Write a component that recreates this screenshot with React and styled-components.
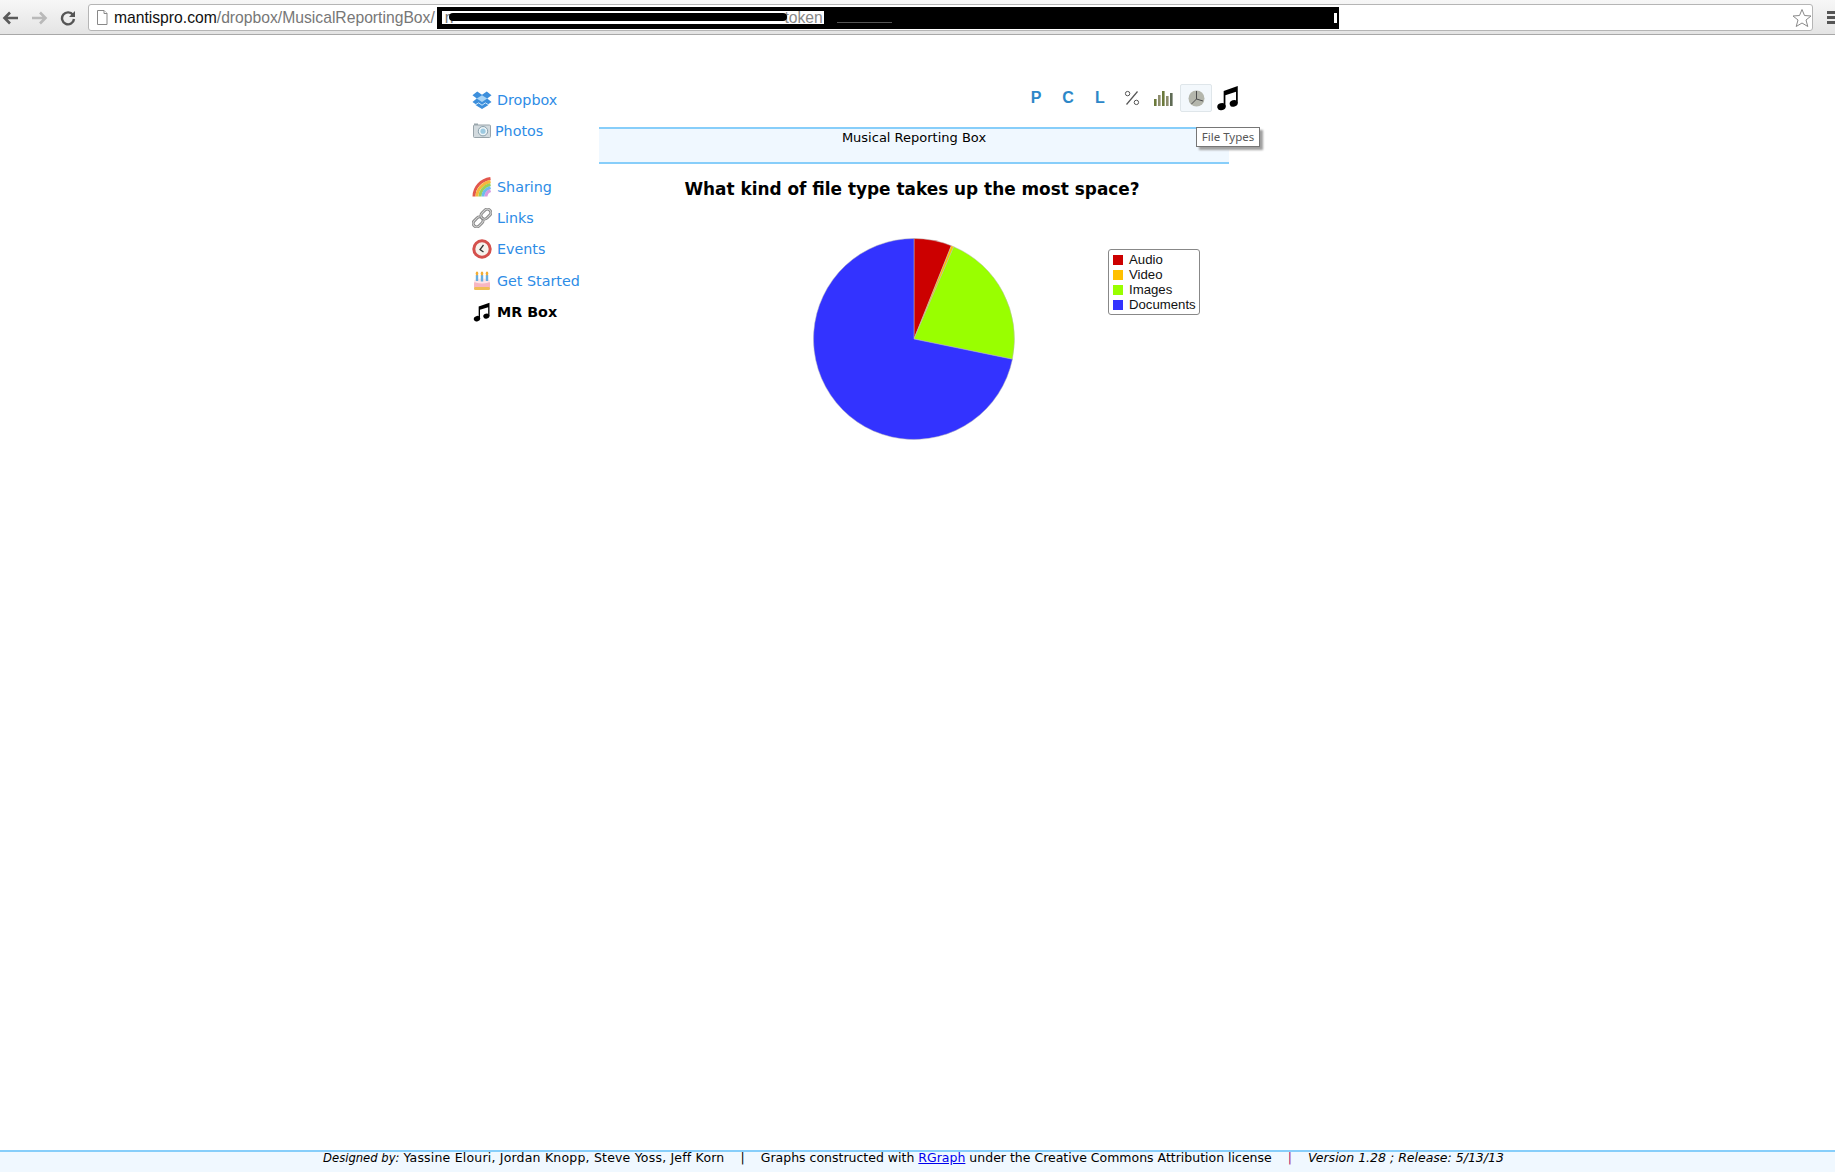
import React from "react";
import styled, { createGlobalStyle } from "styled-components";

const GlobalStyle = createGlobalStyle`
  html, body {
    margin: 0;
    padding: 0;
    background: #fff;
    font-family: "DejaVu Sans", Verdana, sans-serif;
  }
`;

const slices = [
  { label: "Audio", color: "#cc0000", from: 0, to: 21.8 },
  { label: "Video", color: "#ffc000", from: 21.8, to: 23.3 },
  { label: "Images", color: "#99ff00", from: 23.3, to: 101.6 },
  { label: "Documents", color: "#3333ff", from: 101.6, to: 360 },
];

const slicePath = (from, to, r, c) => {
  const point = (deg) => {
    const rad = (deg * Math.PI) / 180;
    return `${c + r * Math.sin(rad)} ${c - r * Math.cos(rad)}`;
  };
  const large = to - from > 180 ? 1 : 0;
  return `M${c} ${c} L${point(from)} A${r} ${r} 0 ${large} 1 ${point(to)} Z`;
};

const MusicNote = ({ size }) => (
  <svg width={size} height={size} viewBox="0 0 24 24">
    <path d="M8 5.5 L21 1 V17 H19.4 V6.2 L9.6 9.4 V20 H8 Z" fill="#000" />
    <ellipse cx="6" cy="20" rx="3.9" ry="3.2" fill="#000" transform="rotate(-18 6 20)" />
    <ellipse cx="17.2" cy="17" rx="3.7" ry="3" fill="#000" transform="rotate(-18 17.2 17)" />
  </svg>
);

const DropboxIcon = () => (
  <svg width="21" height="20" viewBox="0 0 21 21">
    <path d="M5.5 1.5 L10.5 5 L15.5 1.5 L20.5 5.5 L16 9 L20.5 12.5 L17 15 V16 L10.5 20 L4 16 V15 L.5 12.5 L5 9 L.5 5.5 Z" fill="#3d8fdc" />
    <path d="M5 9 L10.5 5.5 L16 9 L10.5 12.5 Z" fill="#a9d4f5" />
    <path d="M4.2 15.2 L7 13.5 L10.5 16 L14 13.5 L16.8 15.2" fill="none" stroke="#d6ecfb" strokeWidth="1" />
  </svg>
);

const CameraIcon = () => (
  <svg width="18" height="15" viewBox="0 0 18 15">
    <rect x="1" y="0.5" width="4" height="2" fill="#9aa5ab" />
    <rect x="0.5" y="2" width="17" height="12.5" rx="1" fill="#d2dade" stroke="#99a4aa" />
    <circle cx="10" cy="8.2" r="4.7" fill="#eef5f8" stroke="#8aa0ac" />
    <circle cx="10" cy="8.2" r="2.6" fill="#9cc9e0" />
  </svg>
);

const RainbowIcon = () => (
  <svg width="20" height="20" viewBox="0 0 20 20" fill="none">
    <path d="M2 19.5 C2 10 9 3 18.5 1.5" stroke="#e2574c" strokeWidth="3" />
    <path d="M5 19.5 C5 12 11 6 18.5 4.5" stroke="#f6b73c" strokeWidth="3" />
    <path d="M8 19.5 C8 14 12 9 18.5 7.5" stroke="#9ad05a" strokeWidth="3" />
    <path d="M11 19.5 C11 15 14 12 18.5 10.5" stroke="#6dbcec" strokeWidth="3" />
    <path d="M14 19.5 C14 17 16 14.5 18.5 13.5" stroke="#d59ce0" strokeWidth="3" />
  </svg>
);

const LinkIcon = () => (
  <svg width="20" height="20" viewBox="0 0 20 20" fill="none">
    <g transform="rotate(-45 10 10)">
      {[-1, 10].map((x) => (
        <g key={x}>
          <rect x={x} y="6.5" width="11" height="7" rx="3.5" stroke="#868686" strokeWidth="3" />
          <rect x={x} y="6.5" width="11" height="7" rx="3.5" stroke="#d8d8d8" strokeWidth="1" />
        </g>
      ))}
    </g>
  </svg>
);

const ClockIcon = () => (
  <svg width="20" height="20" viewBox="0 0 20 20" fill="none">
    <circle cx="10" cy="10" r="8.2" fill="#f6f2ec" stroke="#d4504c" strokeWidth="3" />
    <path d="M11.5 6 L8 10.5 L11.5 13" stroke="#333" strokeWidth="1.3" />
  </svg>
);

const CakeIcon = () => (
  <svg width="18" height="20" viewBox="0 0 18 20">
    <rect x="1" y="10" width="16" height="9" rx="2.5" fill="#f7b6c2" />
    <rect x="1" y="16" width="16" height="3" rx="1.5" fill="#f0bd55" />
    <ellipse cx="9" cy="10" rx="8" ry="2.6" fill="#fde4e8" />
    <rect x="2.8" y="4" width="2.4" height="6" fill="#68aee0" />
    <rect x="7.8" y="4" width="2.4" height="6.5" fill="#68aee0" />
    <rect x="12.8" y="4" width="2.4" height="6" fill="#68aee0" />
    <ellipse cx="4" cy="2.4" rx="1.3" ry="2" fill="#f3ad35" />
    <ellipse cx="9" cy="2.4" rx="1.3" ry="2" fill="#f3ad35" />
    <ellipse cx="14" cy="2.4" rx="1.3" ry="2" fill="#f3ad35" />
  </svg>
);

const BackArrow = ({ color }) => (
  <svg width="17" height="14" viewBox="0 0 17 14" fill="none">
    <path d="M16 7 H4 M8 1.5 L2.5 7 L8 12.5" stroke={color} strokeWidth="2.6" />
  </svg>
);

const ForwardArrow = ({ color }) => (
  <svg width="17" height="14" viewBox="0 0 17 14" fill="none">
    <path d="M1 7 H13 M9 1.5 L14.5 7 L9 12.5" stroke={color} strokeWidth="2.6" />
  </svg>
);

const ReloadIcon = () => (
  <svg width="16" height="16" viewBox="0 0 16 16" fill="none">
    <path d="M13 5 A6 6 0 1 0 14 9" stroke="#555" strokeWidth="2.4" />
    <path d="M15 1 V7 H9 Z" fill="#555" />
  </svg>
);

const PageIcon = () => (
  <svg width="12" height="15" viewBox="0 0 12 15" fill="#fff">
    <path d="M1.5 .5 H8 L11 3.5 V14.5 H1.5 Z" stroke="#888" />
    <path d="M8 .5 V3.5 H11" stroke="#888" />
  </svg>
);

const StarIcon = () => (
  <svg width="20" height="20" viewBox="0 0 20 20" fill="#fff">
    <path d="M10 1.5 L12.5 7.5 L19 8 L14 12 L15.8 18.5 L10 15 L4.2 18.5 L6 12 L1 8 L7.5 7.5 Z" stroke="#8a8a8a" />
  </svg>
);

const PercentIcon = () => (
  <svg width="16" height="16" viewBox="0 0 16 16" fill="none" stroke="#555">
    <path d="M13.5 1.5 L2.5 14.5" strokeWidth="1.2" />
    <circle cx="3.6" cy="3.6" r="2.2" />
    <circle cx="12.4" cy="12.4" r="2.2" />
  </svg>
);

const BarsIcon = () => (
  <svg width="20" height="16" viewBox="0 0 20 16">
    {[
      [0, 9, "#6c7a3c"],
      [4, 5, "#8d8d6d"],
      [8, 1, "#6c7a3c"],
      [12, 6, "#8d8d6d"],
      [16, 3, "#5f6b55"],
    ].map(([x, y, fill]) => (
      <rect key={x} x={x} y={y} width="2.6" height={16 - y} fill={fill} />
    ))}
  </svg>
);

const PieIcon = () => (
  <svg width="17" height="17" viewBox="0 0 17 17" fill="none">
    <circle cx="8.5" cy="8.5" r="8" fill="#b4b6ac" />
    <path d="M8.5 1 V9 L15 11 M8.5 9 L3.5 14" stroke="#4c4c4c" strokeWidth="1" />
  </svg>
);

const navItems = [
  { label: "Dropbox", icon: <DropboxIcon /> },
  { label: "Photos", icon: <CameraIcon />, tight: true },
  { label: "Sharing", icon: <RainbowIcon />, spaced: true },
  { label: "Links", icon: <LinkIcon /> },
  { label: "Events", icon: <ClockIcon /> },
  { label: "Get Started", icon: <CakeIcon /> },
  { label: "MR Box", icon: <MusicNote size={20} />, current: true },
];

const App = () => {
  return (
    <Page>
      <GlobalStyle />
      <BrowserBar>
        <NavButtons>
          <BackArrow color="#5a5a5a" />
          <ForwardArrow color="#b9b9b9" />
          <ReloadIcon />
        </NavButtons>
        <AddressBar>
          <PageIcon />
          <Host>mantispro.com</Host>
          <UrlPath>/dropbox/MusicalReportingBox/</UrlPath>
          <Redaction>
            <RedactedStrip>
              n<RedactedText>token</RedactedText>
              <Scribble />
            </RedactedStrip>
            <RedactedLine />
            <RedactedMark />
          </Redaction>
          <StarSlot>
            <StarIcon />
          </StarSlot>
        </AddressBar>
        <MenuIcon>
          <span />
          <span />
          <span />
        </MenuIcon>
      </BrowserBar>

      <Content>
        <Sidebar>
          {navItems.map((item) => (
            <NavItem key={item.label} $spaced={item.spaced} $current={item.current} $tight={item.tight}>
              <NavIcon>{item.icon}</NavIcon>
              {item.label}
            </NavItem>
          ))}
        </Sidebar>

        <Main>
          <Toolbar>
            <ToolButton>P</ToolButton>
            <ToolButton>C</ToolButton>
            <ToolButton>L</ToolButton>
            <ToolButton>
              <PercentIcon />
            </ToolButton>
            <ToolButton>
              <BarsIcon />
            </ToolButton>
            <ToolButton $active>
              <PieIcon />
              <Tooltip>File Types</Tooltip>
            </ToolButton>
            <ToolButton>
              <MusicNote size={26} />
            </ToolButton>
          </Toolbar>

          <TitleBand>Musical Reporting Box</TitleBand>
          <Question>What kind of file type takes up the most space?</Question>

          <ChartRow>
            <svg width="204" height="204" viewBox="0 0 204 204">
              {slices.map((slice) => (
                <path
                  key={slice.label}
                  d={slicePath(slice.from, slice.to, 100.5, 102)}
                  fill={slice.color}
                  stroke="#b8b8b8"
                  strokeWidth="0.5"
                />
              ))}
            </svg>
            <Legend>
              {slices.map((slice) => (
                <LegendRow key={slice.label}>
                  <Swatch $color={slice.color} />
                  {slice.label}
                </LegendRow>
              ))}
            </Legend>
          </ChartRow>
        </Main>
      </Content>

      <Footer>
        <FooterLabel>Designed by:</FooterLabel>&nbsp;
        <FooterNames>Yassine Elouri, Jordan Knopp, Steve Yoss, Jeff Korn</FooterNames>
        <Divider>|</Divider>
        Graphs constructed with&nbsp;<FooterLink href="#">RGraph</FooterLink>&nbsp;under the Creative Commons
        Attribution license
        <Divider $pink>|</Divider>
        <em>Version 1.28 ; Release: 5/13/13</em>
      </Footer>
    </Page>
  );
};

export default App;

const Page = styled.div`
  display: flex;
  flex-direction: column;
  height: 1172px;
  overflow: hidden;
`;

const BrowserBar = styled.div`
  display: flex;
  align-items: center;
  height: 35px;
  box-sizing: border-box;
  padding-top: 1px;
  background: linear-gradient(#f7f7f7, #e4e4e4);
  border-bottom: 1px solid #a8a8a8;
`;

const NavButtons = styled.div`
  display: flex;
  align-items: center;
  gap: 12px;
  width: 88px;
  box-sizing: border-box;
  padding-left: 2px;
`;

const AddressBar = styled.div`
  display: flex;
  align-items: center;
  width: 1727px;
  height: 27px;
  box-sizing: border-box;
  padding-left: 7px;
  background: #fff;
  border: 1px solid #b5b5b5;
  border-radius: 3px;
  font-family: "Liberation Sans", Arial, sans-serif;
  font-size: 15.7px;
  white-space: nowrap;
`;

const Host = styled.span`
  margin-left: 6px;
  color: #111;
`;

const UrlPath = styled.span`
  color: #777;
`;

const Redaction = styled.div`
  position: relative;
  display: flex;
  align-items: center;
  flex: 0 0 902px;
  height: 22px;
  margin-left: 2px;
  padding-left: 5px;
  box-sizing: border-box;
  background: #000;
`;

const RedactedStrip = styled.div`
  position: relative;
  display: flex;
  align-items: center;
  justify-content: space-between;
  width: 382px;
  height: 13px;
  padding: 0 1px 0 3px;
  box-sizing: border-box;
  background: #fff;
  color: #777;
  line-height: 13px;
`;

const RedactedText = styled.span`
  color: #888;
`;

// black marker stroke across the url
const Scribble = styled.span`
  position: absolute;
  left: 7px;
  top: 2px;
  width: 338px;
  height: 8px;
  border-radius: 4px;
  background: #000;
`;

const RedactedLine = styled.span`
  width: 55px;
  height: 1px;
  margin: 10px 0 0 13px;
  background: #555;
`;

const RedactedMark = styled.span`
  position: absolute;
  right: 2px;
  top: 6px;
  width: 3px;
  height: 10px;
  background: #fff;
`;

const StarSlot = styled.div`
  display: flex;
  margin: 0 0 0 auto;
`;

const MenuIcon = styled.div`
  display: flex;
  flex-direction: column;
  gap: 2px;
  margin-left: 14px;
  width: 8px;

  span {
    height: 3px;
    background: #555;
  }
`;

const Content = styled.div`
  display: flex;
  flex: 1;
  padding: 49px 0 0 472px;
`;

const Sidebar = styled.nav`
  width: 127px;
  flex-shrink: 0;
`;

const NavItem = styled.div`
  display: flex;
  align-items: center;
  gap: ${(props) => (props.$tight ? "3px" : "5px")};
  height: 31.2px;
  margin-top: ${(props) => (props.$spaced ? "25px" : "0")};
  font-size: 14.3px;
  font-weight: ${(props) => (props.$current ? "bold" : "normal")};
  color: ${(props) => (props.$current ? "#000" : "#2d8ce6")};
  white-space: nowrap;
`;

const NavIcon = styled.span`
  display: flex;
  align-items: center;
  justify-content: center;
  width: 20px;
  height: 22px;
`;

const Main = styled.main`
  width: 630px;
`;

const Toolbar = styled.div`
  display: flex;
  justify-content: flex-end;
  height: 43px;
  margin-right: -15px;
`;

const ToolButton = styled.div`
  position: relative;
  display: flex;
  align-items: center;
  justify-content: center;
  width: 32px;
  height: 28px;
  box-sizing: border-box;
  font-family: "Liberation Sans", Arial, sans-serif;
  font-size: 16px;
  font-weight: bold;
  color: #2d87c8;
  background: ${(props) => (props.$active ? "#f3f8fc" : "transparent")};
  border: ${(props) => (props.$active ? "1px solid #dfe6ea" : "1px solid transparent")};
  border-radius: 2px;
`;

const Tooltip = styled.div`
  position: absolute;
  top: 42px;
  left: 15px;
  z-index: 2;
  width: 64px;
  height: 20px;
  box-sizing: border-box;
  font-family: "Noto Sans", sans-serif;
  font-size: 11.5px;
  font-weight: normal;
  line-height: 17px;
  text-align: center;
  color: #575757;
  background: #fff;
  border: 1px solid #767676;
  box-shadow: 3px 3px 2px #a0a0a0;
  white-space: nowrap;
`;

const TitleBand = styled.div`
  height: 37px;
  box-sizing: border-box;
  padding-top: 1px;
  font-size: 13px;
  line-height: 16px;
  text-align: center;
  color: #000;
  background: #f0f8ff;
  border-top: 2px solid #87cefa;
  border-bottom: 2px solid #87cefa;
`;

const Question = styled.h2`
  margin: 15px 0 0;
  padding-right: 4px;
  font-size: 16.9px;
  line-height: 20px;
  font-weight: bold;
  text-align: center;
  color: #000;
`;

const ChartRow = styled.div`
  display: flex;
  align-items: flex-start;
  margin-top: 38px;
  padding-left: 213px;
`;

const Legend = styled.div`
  margin: 12px 0 0 92px;
  padding: 2px 3px 2px 4px;
  background: #fff;
  border: 1px solid #888;
  border-radius: 3px;
  font-family: "Liberation Sans", Arial, sans-serif;
  font-size: 13.2px;
  color: #111;
`;

const LegendRow = styled.div`
  display: flex;
  align-items: center;
  gap: 6px;
  height: 15px;
`;

const Swatch = styled.span`
  width: 10px;
  height: 10px;
  background: ${(props) => props.$color};
`;

const Footer = styled.footer`
  display: flex;
  justify-content: center;
  align-items: center;
  height: 22px;
  box-sizing: border-box;
  padding: 0 8px 9px 0;
  font-size: 12.5px;
  color: #000;
  background: #f0f8ff;
  border-top: 2px solid #87cefa;
  white-space: nowrap;
`;

const FooterLabel = styled.em`
  font-size: 11.6px;
`;

const FooterNames = styled.span`
  letter-spacing: 0.2px;
`;

const Divider = styled.span`
  margin: 0 16px;
  color: ${(props) => (props.$pink ? "#a0146e" : "#000")};
`;

const FooterLink = styled.a`
  color: #0000ee;
  text-decoration: underline;
`;
